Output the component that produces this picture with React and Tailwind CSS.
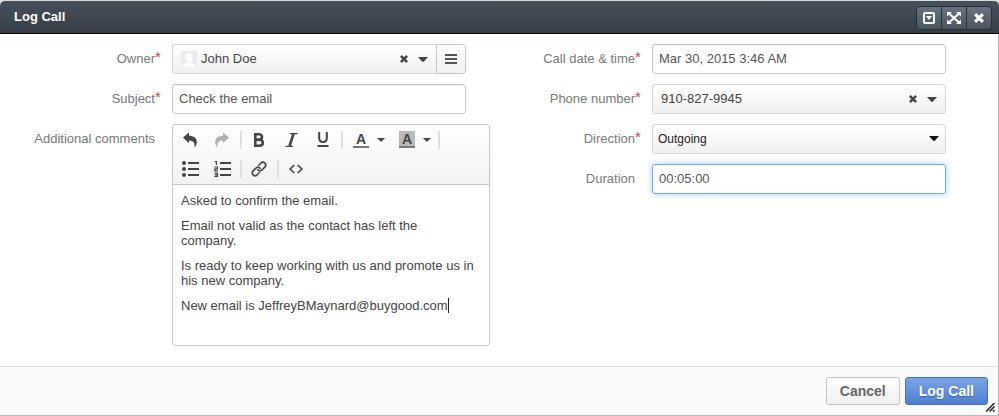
import React from "react";

const fieldFrame = "h-[30px] w-full rounded-[3px] border";
const plainInput = fieldFrame + " border-[#c6c6c6] bg-white px-1.5 pb-0.5 text-[13px] text-[#555] shadow-[inset_0_1px_1px_rgba(0,0,0,0.06)] outline-none";
const pickerFrame = "flex h-[30px] w-full items-center rounded-[3px] border border-[#d6d6d6] bg-linear-to-b from-white to-[#f1f1f1] text-[13px] text-[#444]";

function Caret({ className = "" }) {
  return (
    <svg className={className} width="10" height="5" viewBox="0 0 10 5" fill="currentColor" aria-hidden="true">
      <path d="M0 0h10L6 4.6Q5 5.3 4 4.6Z" />
    </svg>
  );
}

function Cross({ size = 8 }) {
  return (
    <svg width={size} height={size} viewBox="0 0 8 8" stroke="currentColor" strokeWidth="2.5" aria-hidden="true">
      <path d="M.9.9l6.2 6.2M7.1.9L.9 7.1" />
    </svg>
  );
}

function Row({ label, htmlFor, id, required, wide, children }) {
  return (
    <div className="flex gap-[11px]">
      <label
        htmlFor={htmlFor}
        id={id}
        className="flex h-[30px] w-[142px] shrink-0 items-center justify-end text-[13px] text-[#777]"
      >
        {label}
        <span className="h-5 w-1.5 text-[15px] leading-4 text-[#e0304f]">{required ? "*" : ""}</span>
      </label>
      <div className={wide ? "min-w-0 flex-1 pr-[9px]" : "min-w-0 flex-1 pr-[33px]"}>{children}</div>
    </div>
  );
}

function Picker({ id, value, avatar, className }) {
  return (
    <div className={className}>
      <button
        type="button"
        id={id}
        className={avatar ? "flex h-full flex-1 items-center gap-1 pl-2 text-left" : "h-full flex-1 pl-2 text-left"}
      >
        {avatar && (
          <svg width="16" height="16" viewBox="0 0 16 16" aria-hidden="true">
            <path fill="#ebebeb" d="M0 0h16v16H0z" />
            <path
              fill="#fff"
              d="M8 2c2.500 0 3.700 1.700 3.700 4 0 2-.7 3.600-1.700 4.500v1c1.800.8 4.500 1 5 4.500H1c.5-3.500 3.200-3.700 5-4.500v-1C5 9.600 4.300 8 4.300 6c0-2.300 1.200-4 3.700-4z"
            />
          </svg>
        )}
        {value}
      </button>
      <button type="button" aria-label="Clear" className="flex h-full w-4 items-center justify-center">
        <Cross />
      </button>
      <button type="button" aria-label="Open list" className="flex h-full w-[22px] items-center justify-center">
        <Caret />
      </button>
      <span className="w-0.5" />
    </div>
  );
}

function Tool({ label, children }) {
  return (
    <button type="button" aria-label={label} className="flex h-[29px] w-8 items-center justify-center">
      {children}
    </button>
  );
}

function ColorTool({ label, filled }) {
  return (
    <button type="button" aria-label={label} className="flex h-[29px] w-[46px] items-center gap-2 pl-[9px]">
      <span
        className={
          filled
            ? "h-[17px] w-4 border-b-2 border-[#777] bg-[#b9b9b9] text-center text-[14px] leading-4 font-bold"
            : "h-[17px] w-4 border-b-2 border-[#777] text-center text-[14px] leading-4 font-bold"
        }
      >
        A
      </span>
      <svg width="8" height="4" viewBox="0 0 8 4" fill="currentColor" aria-hidden="true">
        <path d="M0 0h8L4 4z" />
      </svg>
    </button>
  );
}

function Separator() {
  return <span className="mr-px ml-0.5 h-[18px] w-0.5 bg-[#e0e0e0]" />;
}

function UndoArrow({ flip }) {
  return (
    <svg
      width="14"
      height="16"
      viewBox="0 0 14 16"
      fill="currentColor"
      className={flip ? "-scale-x-100 text-[#b0b0b0]" : ""}
      aria-hidden="true"
    >
      <path d="M0 5.500L6 .5v3.300C10.500 3.800 13.800 6 13.800 10c0 2.200-.9 4.200-2.300 5.500.6-4.200-.8-7-5.500-7.100v2.800z" />
    </svg>
  );
}

function Editor() {
  return (
    <div className="rounded-[3px] border border-[#c6c6c6] bg-white">
      <div className="rounded-t-[3px] border-b border-[#c6c6c6] bg-linear-to-b from-white to-[#f2f2f2] pb-px pl-px text-[#444]">
        <div className="flex items-center">
          <Tool label="Undo">
            <UndoArrow />
          </Tool>
          <Tool label="Redo">
            <UndoArrow flip />
          </Tool>
          <Separator />
          <Tool label="Bold">
            <svg width="12" height="14" viewBox="0 0 12 14" fill="none" stroke="currentColor" strokeWidth="2.600" aria-hidden="true">
              <path d="M2.300 1.300h3.700c4 0 4 5.300 0 5.300H2.300zM2.300 6.700h4.100c4.500 0 4.500 6 0 6H2.300z" />
            </svg>
          </Tool>
          <Tool label="Italic">
            <svg width="13" height="14" viewBox="0 0 13 14" fill="none" stroke="currentColor" aria-hidden="true">
              <path strokeWidth="2.600" d="M8.500 1L4.500 13" />
              <path strokeWidth="1.200" d="M5 .7h7.500M.5 13.300H8" />
            </svg>
          </Tool>
          <Tool label="Underline">
            <svg width="12" height="15" viewBox="0 0 12 15" fill="none" stroke="currentColor" aria-hidden="true">
              <path strokeWidth="2" d="M2.200 0v6.300c0 5 7.600 5 7.600 0V0" />
              <path strokeWidth="2" d="M.5 14h11" />
            </svg>
          </Tool>
          <Separator />
          <ColorTool label="Text color" />
          <ColorTool label="Background color" filled />
          <Separator />
        </div>
        <div className="flex items-center">
          <Tool label="Bullet list">
            <svg width="17" height="16" viewBox="0 0 17 16" fill="currentColor" aria-hidden="true">
              <circle cx="2" cy="2" r="2" />
              <circle cx="2" cy="8" r="2" />
              <circle cx="2" cy="14" r="2" />
              <path d="M6 1h11v2H6zM6 7h11v2H6zM6 13h11v2H6z" />
            </svg>
          </Tool>
          <Tool label="Numbered list">
            <svg width="17" height="16" viewBox="0 0 17 16" fill="currentColor" aria-hidden="true">
              <path d="M6 1h11v2H6zM6 7h11v2H6zM6 13h11v2H6z" />
              <path
                fill="none"
                stroke="currentColor"
                strokeWidth="1.200"
                d="M.8.6h1.600V4M.3 6h3.200v1.800H.9v2.100h3M.3 12h3.200v3.400H.3M1 13.700h2.500"
              />
            </svg>
          </Tool>
          <Separator />
          <Tool label="Link">
            <svg width="18" height="18" viewBox="0 0 18 18" fill="none" stroke="currentColor" strokeWidth="1.600" aria-hidden="true">
              <g transform="rotate(-45 9 9)">
                <path d="M5 11.800H3.500a2.800 2.800 0 010-5.600h4a2.800 2.800 0 012.600 3.800" />
                <path d="M13 6.200h1.500a2.800 2.800 0 010 5.600h-4A2.800 2.800 0 017.900 8" />
                <path d="M5 11.800h2.500M13 6.200h-2.500" />
              </g>
            </svg>
          </Tool>
          <Separator />
          <Tool label="Source code">
            <svg width="14" height="10" viewBox="0 0 14 10" fill="none" stroke="currentColor" strokeWidth="1.700" aria-hidden="true">
              <path d="M5.200 1L1.200 5l4 4M8.800 1l4 4-4 4" />
            </svg>
          </Tool>
        </div>
      </div>
      <div
        role="textbox"
        aria-multiline="true"
        aria-labelledby="comments-label"
        contentEditable
        suppressContentEditableWarning
        className="flex min-h-40 flex-col gap-2.5 py-2 pr-3.5 pl-2 text-[13px] leading-[15px] text-[#444] outline-none"
      >
        <p>Asked to confirm the email.</p>
        <p>Email not valid as the contact has left the company.</p>
        <p>Is ready to keep working with us and promote us in his new company.</p>
        <p>
          New email is JeffreyBMaynard@buygood.com
          <span className="inline-block h-[15px] w-px bg-[#222] align-top" />
        </p>
      </div>
    </div>
  );
}

const windowButton =
  "flex h-[22px] w-6 items-center justify-center bg-linear-to-b from-[#687380] to-[#4a545f] text-white";

export default function App() {
  return (
    <div className="bg-[#d9dbda] pt-px font-['Liberation_Sans',Arial,sans-serif]">
      <header className="flex h-[33px] items-center justify-between rounded-t-[5px] border-b border-black bg-linear-to-b from-[#48515c] to-[#363d46] pr-[7px] pl-3.5">
        <h1 className="text-[13px] font-bold text-white">Log Call</h1>
        <div className="mt-0.5 flex gap-px overflow-hidden rounded-[4px] border border-[#2a3038] bg-[#2a3038]">
          <button type="button" aria-label="Minimize" className={windowButton}>
            <svg width="12" height="12" viewBox="0 0 12 12" aria-hidden="true">
              <rect x="1" y="1" width="10" height="10" rx="1" fill="none" stroke="currentColor" strokeWidth="2" />
              <path fill="currentColor" d="M3 4h6L6 8z" />
            </svg>
          </button>
          <button type="button" aria-label="Maximize" className={windowButton}>
            <svg width="14" height="12" viewBox="0 0 14 12" fill="currentColor" aria-hidden="true">
              <path d="M0 0h5L0 4.500zM14 0H9l5 4.500zM0 12h5L0 7.500zM14 12H9l5-4.500z" />
              <path stroke="currentColor" strokeWidth="2" d="M2 1.500l10 9M12 1.500l-10 9" />
            </svg>
          </button>
          <button type="button" aria-label="Close" className={windowButton}>
            <Cross size={10} />
          </button>
        </div>
      </header>

      <form className="relative border-r border-b border-[#b8b8b8] bg-white" onSubmit={(e) => e.preventDefault()}>
        <div className="grid grid-cols-2 px-[19px] pt-2.5 pb-5">
          <div className="flex flex-col gap-2.5">
            <Row label="Owner" htmlFor="owner" required>
              <div className="flex">
                <Picker id="owner" value="John Doe" avatar className={pickerFrame + " rounded-r-none border-r-0"} />
                <button
                  type="button"
                  aria-label="Choose owner"
                  className="flex h-[30px] w-[30px] shrink-0 items-center justify-center rounded-r-[3px] border border-[#c6c6c6] bg-linear-to-b from-white to-[#f0f0f0] text-[#555]"
                >
                  <svg width="12" height="10" viewBox="0 0 12 10" fill="currentColor" aria-hidden="true">
                    <path d="M0 0h12v2H0zM0 4h12v2H0zM0 8h12v2H0z" />
                  </svg>
                </button>
              </div>
            </Row>
            <Row label="Subject" htmlFor="subject" required>
              <input id="subject" type="text" defaultValue="Check the email" className={plainInput} />
            </Row>
            <Row label="Additional comments" id="comments-label" wide>
              <Editor />
            </Row>
          </div>

          <div className="flex flex-col gap-2.5">
            <Row label="Call date &amp; time" htmlFor="call-date" required>
              <input id="call-date" type="text" defaultValue="Mar 30, 2015 3:46 AM" className={plainInput} />
            </Row>
            <Row label="Phone number" htmlFor="phone" required>
              <Picker id="phone" value="910-827-9945" className={pickerFrame} />
            </Row>
            <Row label="Direction" htmlFor="direction" required>
              <div className="relative">
                <select
                  id="direction"
                  defaultValue="Outgoing"
                  className={
                    fieldFrame +
                    " appearance-none border-[#d6d6d6] bg-linear-to-b from-white to-[#f1f1f1] pl-[5px] text-[12px] text-[#222] outline-none"
                  }
                >
                  <option>Outgoing</option>
                  <option>Incoming</option>
                </select>
                <Caret className="pointer-events-none absolute top-3 right-[7px] text-[#111]" />
              </div>
            </Row>
            <Row label="Duration" htmlFor="duration">
              <input
                id="duration"
                type="text"
                defaultValue="00:05:00"
                className={
                  fieldFrame +
                  " border-[#66afe9] bg-white px-1.5 pb-0.5 text-[13px] text-[#555] shadow-[0_0_6px_rgba(102,175,233,0.6)] outline-none"
                }
              />
            </Row>
          </div>
        </div>

        <footer className="flex h-[49px] items-center justify-end gap-[5px] border-t border-[#dfdfdf] bg-[#fafafa] pr-2.5">
          <button
            type="button"
            className="h-7 rounded-[3px] border border-[#c4c4c4] bg-linear-to-b from-white to-[#f0f0f0] px-[13px] text-[14px] font-bold text-[#666]"
          >
            Cancel
          </button>
          <button
            type="submit"
            className="h-7 rounded-[3px] border border-[#4670b8] bg-linear-to-b from-[#7ba3e6] to-[#4f7fd0] px-[13px] text-[14px] font-bold text-white text-shadow-[0_1px_1px_rgba(0,0,0,0.3)]"
          >
            Log Call
          </button>
        </footer>
        <svg
          className="pointer-events-none absolute right-[3px] bottom-[3px]"
          width="9"
          height="9"
          viewBox="0 0 9 9"
          stroke="#222"
          strokeWidth="1.500"
          aria-hidden="true"
        >
          <path d="M0 8.500L8.500 0M3.500 8.500l5-5M7 8.500L8.500 7" />
        </svg>
      </form>
    </div>
  );
}
